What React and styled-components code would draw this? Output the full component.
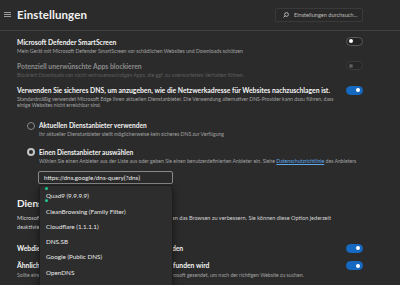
import React from "react";
import styled, { createGlobalStyle, css } from "styled-components";

const GlobalStyle = createGlobalStyle`
  html, body { margin: 0; padding: 0; background: #2b2b2b; overflow: hidden; }
  body { font-family: Lato, "Noto Sans", sans-serif; }
  * { box-sizing: border-box; }
`;

const Page = styled.div`
  width: 400px;
  height: 285px;
  overflow: hidden;
  background: #2b2b2b;
  color: #ffffff;
`;

const Header = styled.header`
  height: 31px;
  border-bottom: 1px solid #424242;
  display: flex;
  align-items: center;
  padding: 0 37px 1px 4px;
`;

const MenuIcon = styled.svg`
  width: 7px;
  height: 5px;
  flex: none;
`;

const PageTitle = styled.h1`
  margin: 0 0 0 6px;
  flex: 1;
  font-size: 11.5px;
  font-weight: 700;
  letter-spacing: 0.1px;
  color: #f2f2f2;
`;

const Search = styled.div`
  width: 88px;
  height: 14px;
  border: 1px solid #3a3a3a;
  border-radius: 2px;
  background: #292929;
  display: flex;
  align-items: center;
  gap: 5px;
  padding-left: 7px;
  font-size: 5.6px;
  color: #bdbdbd;
  white-space: nowrap;
`;

const Content = styled.main`
  padding: 6.5px 37px 0 17px;
  display: flex;
  flex-direction: column;
`;

const Row = styled.div`
  display: flex;
  justify-content: space-between;
  align-items: flex-start;
  margin-top: ${(p) => p.$gap ?? 0}px;
`;

const RowText = styled.div`
  display: flex;
  flex-direction: column;
`;

const Title = styled.div`
  font-size: 6.8px;
  line-height: 9px;
  font-weight: 700;
  color: ${(p) => (p.$dim ? "#8c8c8c" : "#f5f5f5")};
  white-space: nowrap;
`;

const Desc = styled.div`
  font-size: 5.15px;
  line-height: 6.6px;
  margin-top: ${(p) => p.$mt ?? 1}px;
  color: ${(p) => (p.$dim ? "#5e5e5e" : "#a3a3a3")};
  white-space: nowrap;
`;

const Link = styled.a`
  color: #5ea7e8;
  text-decoration: underline;
`;

const Toggle = styled.div`
  width: 17px;
  height: 9px;
  flex: none;
  border-radius: 5px;
  position: relative;
  margin-top: ${(p) => p.$mt ?? 0}px;
  ${(p) =>
    p.$state === "on"
      ? css`
          background: #1669c1;
          border: 1px solid #1669c1;
        `
      : p.$state === "disabled"
      ? css`
          background: #262626;
          border: 1px solid #3a3a3a;
        `
      : css`
          background: #232323;
          border: 1px solid #5a5a5a;
        `}
  &::after {
    content: "";
    position: absolute;
    top: 1.5px;
    width: 4px;
    height: 4px;
    border-radius: 50%;
    ${(p) =>
      p.$state === "on"
        ? css`
            right: 2px;
            background: #ffffff;
          `
        : p.$state === "disabled"
        ? css`
            left: 2px;
            background: #5c5c5c;
          `
        : css`
            left: 2px;
            background: #ffffff;
          `}
  }
`;

const RadioRow = styled.div`
  display: flex;
  align-items: center;
  gap: 4px;
  padding-left: 10px;
  margin-top: ${(p) => p.$gap}px;
`;

const Radio = styled.span`
  width: 8px;
  height: 8px;
  border-radius: 50%;
  flex: none;
  background: #2b2b2b;
  border: ${(p) => (p.$checked ? "2px solid #c4c4c4" : "1px solid #8a8a8a")};
`;

const RadioLabel = styled.span`
  font-size: 6.6px;
  line-height: 9px;
  font-weight: 700;
  color: #f2f2f2;
  white-space: nowrap;
`;

const RadioDesc = styled(Desc)`
  padding-left: 22px;
`;

const InputWrap = styled.div`
  position: relative;
  margin: 6px 0 0 21px;
  width: 135px;
`;

const UrlInput = styled.div`
  height: 13.5px;
  border: 1px solid #8a8a8a;
  border-radius: 2px;
  padding-left: 5px;
  display: flex;
  align-items: center;
  font-size: 6.3px;
  color: #eeeeee;
  white-space: nowrap;
`;

const Dropdown = styled.ul`
  position: absolute;
  left: 1px;
  top: calc(100% + 1px);
  width: 134px;
  height: 140px;
  margin: 0;
  padding: 2px 0 0;
  list-style: none;
  background: #2d2d2d;
  border: 1px solid #1e1e1e;
  border-radius: 3px;
  box-shadow: 0 3px 8px rgba(0, 0, 0, 0.45);
  z-index: 5;
`;

const Option = styled.li`
  height: 15.3px;
  display: flex;
  align-items: center;
  padding-left: 6px;
  font-size: 6.3px;
  color: #e8e8e8;
  white-space: nowrap;
`;

const Marker = styled.span`
  position: absolute;
  left: 5px;
  top: ${(p) => p.$top}px;
  width: 3px;
  height: 3px;
  border-radius: 50%;
  background: #1fc98c;
`;

const Heading = styled.h2`
  margin: 12.5px 0 0;
  font-size: 10px;
  line-height: 13px;
  font-weight: 700;
  color: #f2f2f2;
`;

const Para = styled.div`
  margin-top: 3.5px;
  font-size: 5.6px;
  line-height: 9.3px;
  color: #d2d2d2;
  white-space: nowrap;
`;

const SmallDesc = styled(Desc)`
  margin-top: 2.5px;
  line-height: 7px;
`;

const providers = [
  "Quad9 (9.9.9.9)",
  "CleanBrowsing (Family Filter)",
  "Cloudflare (1.1.1.1)",
  "DNS.SB",
  "Google (Public DNS)",
  "OpenDNS",
];

export default function App() {
  return (
    <Page>
      <GlobalStyle />
      <Header>
        <MenuIcon viewBox="0 0 7 5">
          <rect x="0" y="0" width="7" height="1" fill="#9a9a9a" />
          <rect x="0" y="2" width="7" height="1" fill="#9a9a9a" />
          <rect x="0" y="4" width="7" height="1" fill="#9a9a9a" />
        </MenuIcon>
        <PageTitle>Einstellungen</PageTitle>
        <Search>
          <svg width="6" height="6" viewBox="0 0 12 12" fill="none">
            <circle cx="7" cy="5" r="3.8" stroke="#d8d8d8" strokeWidth="1.5" />
            <line x1="4.3" y1="7.7" x2="1" y2="11" stroke="#d8d8d8" strokeWidth="1.6" />
          </svg>
          <span>Einstellungen durchsuch...</span>
        </Search>
      </Header>

      <Content>
        <Row>
          <RowText>
            <Title>Microsoft Defender SmartScreen</Title>
            <Desc>
              Mein Gerät mit Microsoft Defender SmartScreen vor schädlichen Websites und Downloads schützen
            </Desc>
          </RowText>
          <Toggle $state="off" $mt={-1} />
        </Row>

        <Row $gap={7.5}>
          <RowText>
            <Title $dim>Potenziell unerwünschte Apps blockieren</Title>
            <Desc $dim>
              Blockiert Downloads von nicht vertrauenswürdigen Apps, die ggf. zu unerwartetem Verhalten führen.
            </Desc>
          </RowText>
          <Toggle $state="disabled" $mt={-0.5} />
        </Row>

        <Row $gap={7.5}>
          <RowText>
            <Title>
              Verwenden Sie sicheres DNS, um anzugeben, wie die Netzwerkadresse für Websites nachzuschlagen ist.
            </Title>
            <Desc>
              Standardmäßig verwendet Microsoft Edge Ihren aktuellen Dienstanbieter. Die Verwendung alternativer
              DNS-Provider kann dazu führen, dass
              <br />
              einige Websites nicht erreichbar sind.
            </Desc>
          </RowText>
          <Toggle $state="on" />
        </Row>

        <RadioRow $gap={12.5}>
          <Radio />
          <RadioLabel>Aktuellen Dienstanbieter verwenden</RadioLabel>
        </RadioRow>
        <RadioDesc>
          Ihr aktueller Dienstanbieter stellt möglicherweise kein sicheres DNS zur Verfügung
        </RadioDesc>

        <RadioRow $gap={10}>
          <Radio $checked />
          <RadioLabel>Einen Dienstanbieter auswählen</RadioLabel>
        </RadioRow>
        <RadioDesc>
          Wählen Sie einen Anbieter aus der Liste aus oder geben Sie einen benutzerdefinierten Anbieter ein. Siehe{" "}
          <Link>Datenschutzrichtlinie</Link> des Anbieters
        </RadioDesc>

        <InputWrap>
          <UrlInput>https://dns.google/dns-query{"{?dns}"}</UrlInput>
          <Dropdown>
            {providers.map((p) => (
              <Option key={p}>{p}</Option>
            ))}
            <Marker $top={1.3} />
            <Marker $top={13} />
          </Dropdown>
        </InputWrap>

        <Heading>Dienste</Heading>
        <Para>
          Microsoft Edge verwendet möglicherweise Webdienste, um Ihnen das Browsen zu verbessern. Sie können diese Option jederzeit
          <br />
          deaktivieren.
        </Para>

        <Row $gap={12}>
          <Title>Webdienst zur Behebung von Seitenfehlern verwenden</Title>
          <Toggle $state="on" />
        </Row>

        <Row $gap={8}>
          <RowText>
            <Title>Ähnliche Websites vorschlagen, wenn Seite nicht gefunden wird</Title>
            <SmallDesc>
              Sollte eine Seite nicht gefunden werden, wird die Webadresse an Microsoft gesendet, um nach der richtigen Website zu suchen.
            </SmallDesc>
          </RowText>
          <Toggle $state="on" $mt={0.5} />
        </Row>
      </Content>
    </Page>
  );
}
